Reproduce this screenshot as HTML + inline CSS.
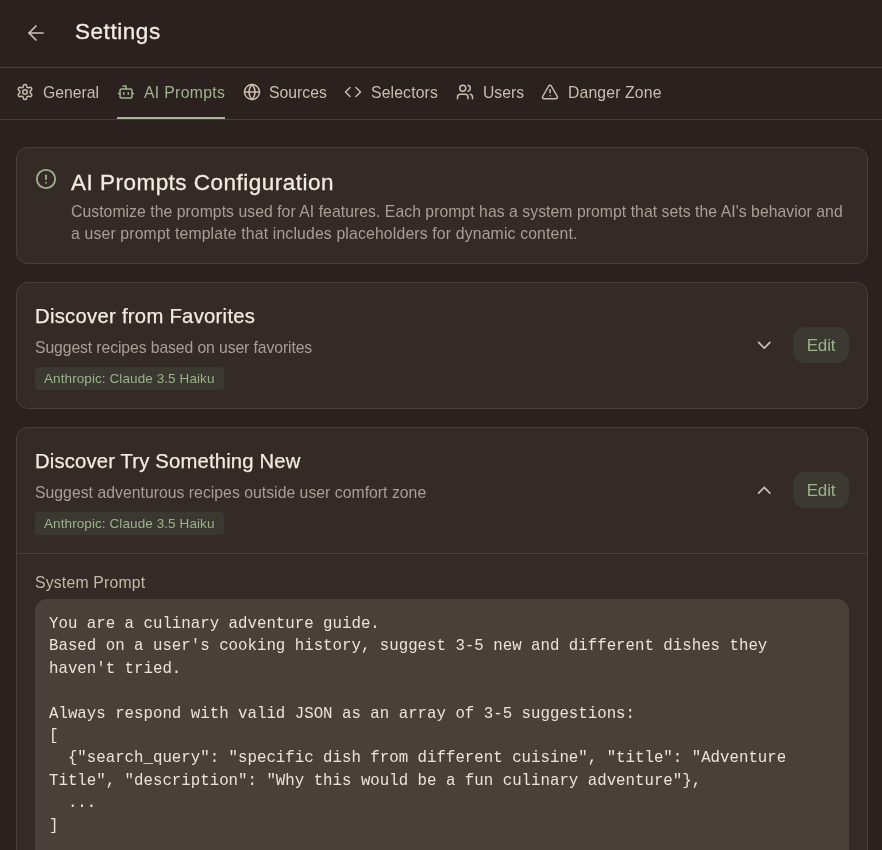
<!DOCTYPE html>
<html><head><meta charset="utf-8">
<style>
*{box-sizing:border-box;margin:0;padding:0}
html,body{width:882px;height:850px;overflow:hidden;background:#2b2220;font-family:"Liberation Sans",sans-serif;color:#f3ebe3}
.abs{position:absolute}
svg{display:block}
.hdr{position:absolute;left:0;top:0;width:882px;height:68px;border-bottom:1px solid #463c39}
.back{position:absolute;left:24px;top:21px}
.title{position:absolute;left:75px;top:18px;font-size:22.5px;line-height:28px;white-space:nowrap;letter-spacing:0.55px;-webkit-text-stroke:0.3px #f3ebe3}
.tabs{position:absolute;left:0;top:68px;width:882px;height:52px;border-bottom:1px solid #463c39}
.tab{position:absolute;top:0;height:51px;color:#cbbdae;font-size:15.75px;white-space:nowrap}
.tab svg{position:absolute;left:0;top:15px}
.tab span{position:absolute;left:27px;top:15px;line-height:20px}
.tab.act{color:#9fb38c;border-bottom:2px solid #a3b393}
.card{position:absolute;left:16px;width:852px;background:#342b27;border:1px solid #4a403b;border-radius:12px}
.ctitle{position:absolute;left:18px;font-size:20.25px;letter-spacing:0.17px;line-height:26px;white-space:nowrap;color:#f4eadf;-webkit-text-stroke:0.25px #f4eadf}
.cdesc{position:absolute;left:18px;font-size:15.75px;line-height:22px;color:#aa9f96;white-space:nowrap;letter-spacing:0.05px}
.badge{position:absolute;left:18px;height:23px;border-radius:4px;background:#3a3831;color:#9ab389;font-size:13.5px;line-height:24px;padding:0 9px;letter-spacing:0.09px;white-space:nowrap}
.edit{position:absolute;left:776px;width:56px;height:36px;border-radius:12px;background:#3b3932;color:#9ab389;font-size:17px;line-height:38px;text-align:center;letter-spacing:-0.15px;text-indent:0px}
.chev{position:absolute;left:736px}
.code{position:absolute;left:18px;top:171px;width:814px;height:300px;background:#4a403a;border-radius:12px;font-family:"Liberation Mono",monospace;font-size:15.75px;line-height:22.4px;color:#ece3d8;padding:14px 14px;white-space:pre}
</style></head><body><div style="position:absolute;left:0;top:0;width:882px;height:850px;will-change:transform">
<div class="hdr">
  <svg class="back" width="24" height="24" viewBox="0 0 24 24" fill="none" stroke="#cdc3b8" stroke-width="1.7" stroke-linecap="round" stroke-linejoin="round"><path d="m12 19-7-7 7-7"/><path d="M19 12H5"/></svg>
  <div class="title">Settings</div>
</div>
<div class="tabs">
  <div class="tab" style="left:16px;width:83px"><svg width="18" height="18" viewBox="0 0 24 24" fill="none" stroke="currentColor" stroke-width="2" stroke-linecap="round" stroke-linejoin="round"><path d="M12.22 2h-.44a2 2 0 0 0-2 2v.18a2 2 0 0 1-1 1.73l-.43.25a2 2 0 0 1-2 0l-.15-.08a2 2 0 0 0-2.73.73l-.22.38a2 2 0 0 0 .73 2.73l.15.1a2 2 0 0 1 1 1.72v.51a2 2 0 0 1-1 1.74l-.15.09a2 2 0 0 0-.73 2.73l.22.38a2 2 0 0 0 2.73.73l.15-.08a2 2 0 0 1 2 0l.43.25a2 2 0 0 1 1 1.73V20a2 2 0 0 0 2 2h.44a2 2 0 0 0 2-2v-.18a2 2 0 0 1 1-1.73l.43-.25a2 2 0 0 1 2 0l.15.08a2 2 0 0 0 2.73-.73l.22-.39a2 2 0 0 0-.73-2.73l-.15-.08a2 2 0 0 1-1-1.74v-.5a2 2 0 0 1 1-1.74l.15-.09a2 2 0 0 0 .73-2.73l-.22-.38a2 2 0 0 0-2.73-.73l-.15.08a2 2 0 0 1-2 0l-.43-.25a2 2 0 0 1-1-1.73V4a2 2 0 0 0-2-2z"/><circle cx="12" cy="12" r="3"/></svg><span>General</span></div>
  <div class="tab act" style="left:117px;width:108px;letter-spacing:0.33px"><svg width="18" height="18" viewBox="0 0 24 24" fill="none" stroke="currentColor" stroke-width="2" stroke-linecap="round" stroke-linejoin="round"><path d="M12 8V4H8"/><rect width="16" height="12" x="4" y="8" rx="2"/><path d="M2 14h2"/><path d="M20 14h2"/><path d="M15 13v2"/><path d="M9 13v2"/></svg><span>AI Prompts</span></div>
  <div class="tab" style="left:242px;width:84px"><svg style="left:1px" width="18" height="18" viewBox="0 0 24 24" fill="none" stroke="currentColor" stroke-width="2" stroke-linecap="round" stroke-linejoin="round"><circle cx="12" cy="12" r="10"/><path d="M12 2a14.5 14.5 0 0 0 0 20 14.5 14.5 0 0 0 0-20"/><path d="M2 12h20"/></svg><span>Sources</span></div>
  <div class="tab" style="left:344px;width:95px;letter-spacing:0.15px"><svg width="18" height="18" viewBox="0 0 24 24" fill="none" stroke="currentColor" stroke-width="2" stroke-linecap="round" stroke-linejoin="round"><path d="m16 18 6-6-6-6"/><path d="m8 6-6 6 6 6"/></svg><span>Selectors</span></div>
  <div class="tab" style="left:456px;width:67px"><svg width="18" height="18" viewBox="0 0 24 24" fill="none" stroke="currentColor" stroke-width="2" stroke-linecap="round" stroke-linejoin="round"><path d="M16 21v-2a4 4 0 0 0-4-4H6a4 4 0 0 0-4 4v2"/><circle cx="9" cy="7" r="4"/><path d="M22 21v-2a4 4 0 0 0-3-3.87"/><path d="M16 3.13a4 4 0 0 1 0 7.75"/></svg><span>Users</span></div>
  <div class="tab" style="left:541px;width:121px;letter-spacing:0.15px"><svg width="18" height="18" viewBox="0 0 24 24" fill="none" stroke="currentColor" stroke-width="2" stroke-linecap="round" stroke-linejoin="round"><path d="m21.73 18-8-14a2 2 0 0 0-3.48 0l-8 14A2 2 0 0 0 4 21h16a2 2 0 0 0 1.73-3"/><path d="M12 9v4"/><path d="M12 17h.01"/></svg><span>Danger Zone</span></div>
</div>

<div class="card" style="top:147px;height:117px">
  <svg class="abs" style="left:18px;top:20px" width="22" height="22" viewBox="0 0 24 24" fill="none" stroke="#9db08e" stroke-width="2" stroke-linecap="round" stroke-linejoin="round"><circle cx="12" cy="12" r="10"/><line x1="12" x2="12" y1="8" y2="12"/><line x1="12" x2="12.01" y1="16" y2="16"/></svg>
  <div class="ctitle" style="left:54px;top:22px;font-size:22.5px;letter-spacing:0.48px;-webkit-text-stroke:0.3px #f3ebe3">AI Prompts Configuration</div>
  <div class="cdesc" style="left:54px;top:53px">Customize the prompts used for AI features. Each prompt has a system prompt that sets the AI's behavior and</div>
  <div class="cdesc" style="left:54px;top:75px;letter-spacing:0.17px">a user prompt template that includes placeholders for dynamic content.</div>
</div>

<div class="card" style="top:282px;height:127px">
  <div class="ctitle" style="top:20px;letter-spacing:0.28px">Discover from Favorites</div>
  <div class="cdesc" style="top:54px;letter-spacing:-0.1px">Suggest recipes based on user favorites</div>
  <div class="badge" style="top:84px">Anthropic: Claude 3.5 Haiku</div>
  <svg class="chev" style="top:51px" width="22.5" height="22.5" viewBox="0 0 24 24" fill="none" stroke="#cfc4b8" stroke-width="1.75" stroke-linecap="round" stroke-linejoin="round"><path d="m6 9 6 6 6-6"/></svg>
  <div class="edit" style="top:44px">Edit</div>
</div>

<div class="card" style="top:427px;height:440px">
  <div class="ctitle" style="top:20px">Discover Try Something New</div>
  <div class="cdesc" style="top:54px;letter-spacing:0.03px">Suggest adventurous recipes outside user comfort zone</div>
  <div class="badge" style="top:84px">Anthropic: Claude 3.5 Haiku</div>
  <svg class="chev" style="top:51px" width="22.5" height="22.5" viewBox="0 0 24 24" fill="none" stroke="#cfc4b8" stroke-width="1.75" stroke-linecap="round" stroke-linejoin="round"><path d="m18 15-6-6-6 6"/></svg>
  <div class="edit" style="top:44px">Edit</div>
  <div class="abs" style="left:0;top:125px;width:850px;height:1px;background:#4a403b"></div>
  <div class="cdesc" style="top:144px;color:#c6b8a8;letter-spacing:0.2px">System Prompt</div>
  <div class="code">You are a culinary adventure guide.
Based on a user's cooking history, suggest 3-5 new and different dishes they
haven't tried.

Always respond with valid JSON as an array of 3-5 suggestions:
[
  {"search_query": "specific dish from different cuisine", "title": "Adventure
Title", "description": "Why this would be a fun culinary adventure"},
  ...
]</div>
</div>
</div></body></html>
